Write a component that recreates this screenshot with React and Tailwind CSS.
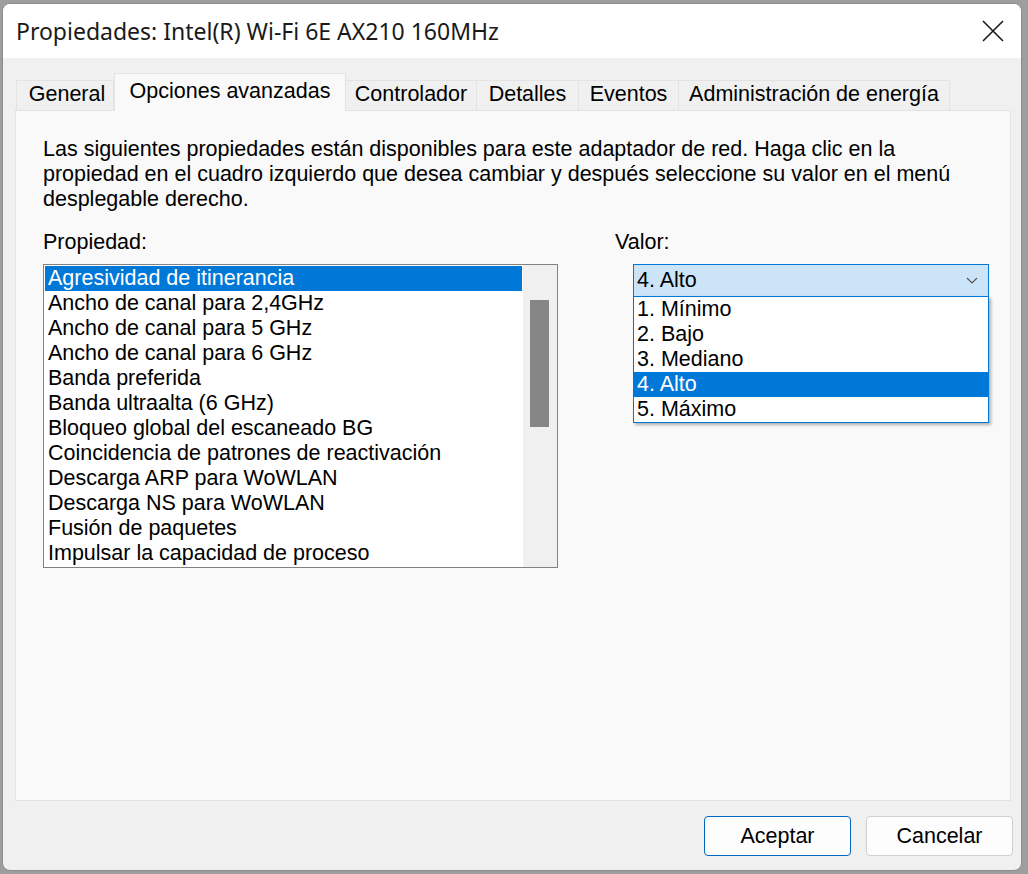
import React, { useState } from 'react';

const tabs = [
  { label: 'General', w: 'w-[98px]' },
  { label: 'Opciones avanzadas', w: 'w-[232px]' },
  { label: 'Controlador', w: 'w-[132px]' },
  { label: 'Detalles', w: 'w-[103px]' },
  { label: 'Eventos', w: 'w-[101px]' },
  { label: 'Administración de energía', w: 'w-[272px]' },
];

const properties = [
  'Agresividad de itinerancia',
  'Ancho de canal para 2,4GHz',
  'Ancho de canal para 5 GHz',
  'Ancho de canal para 6 GHz',
  'Banda preferida',
  'Banda ultraalta (6 GHz)',
  'Bloqueo global del escaneado BG',
  'Coincidencia de patrones de reactivación',
  'Descarga ARP para WoWLAN',
  'Descarga NS para WoWLAN',
  'Fusión de paquetes',
  'Impulsar la capacidad de proceso',
];

const values = ['1. Mínimo', '2. Bajo', '3. Mediano', '4. Alto', '5. Máximo'];

export default function App() {
  const [activeTab] = useState(1);
  const [selectedProp, setSelectedProp] = useState(0);
  const [value, setValue] = useState(3);

  return (
    <div className="w-[1028px] h-[874px] bg-[#9e9e9e] pt-[3px] pl-[2px] pr-[6px] pb-[3px] overflow-hidden">
      <div className="h-full flex flex-col rounded-[8px] border border-[#8c8c8c] bg-[#f0f0f0] overflow-hidden [font-family:'Liberation_Sans',Arial,sans-serif] text-[21.5px] leading-[25px] text-black">
        {/* title bar */}
        <div className="h-[54px] shrink-0 bg-white flex items-center justify-between pl-[13px] pr-[17px]">
          <span className="[font-family:'Noto_Sans',sans-serif] text-[23px] leading-[30px] text-[#1a1a1a]">
            Propiedades: Intel(R) Wi-Fi 6E AX210 160MHz
          </span>
          <svg width="22" height="22" viewBox="0 0 22 22">
            <path d="M1 1 L21 21 M21 1 L1 21" stroke="#1a1a1a" strokeWidth="1.6" fill="none" />
          </svg>
        </div>

        {/* tab strip */}
        <div className="flex items-end h-[52px] pl-[14px] pt-[14px]">
          {tabs.map((t, i) =>
            i === activeTab ? (
              <div
                key={t.label}
                className={`${t.w} h-[38px] -mb-[1px] relative z-10 bg-[#f9f9f9] border border-b-0 border-[#e3e3e3] flex items-start justify-center pt-[5px]`}
              >
                {t.label}
              </div>
            ) : (
              <div
                key={t.label}
                className={`${t.w} h-[30px] bg-[#f0f0f0] border border-b-0 border-[#e3e3e3] -ml-[1px] flex items-center justify-center pb-[2px] ${
                  i === 0 ? 'pl-[4px]' : ''
                }`}
              >
                {t.label}
              </div>
            )
          )}
        </div>

        {/* tab page */}
        <div className="ml-[12px] mr-[10px] h-[691px] shrink-0 bg-[#f9f9f9] border border-[#e3e3e3] pl-[27px] pt-[26px]">
          <p className="w-[920px]">
            Las siguientes propiedades están disponibles para este adaptador de red. Haga clic en la
            propiedad en el cuadro izquierdo que desea cambiar y después seleccione su valor en el menú
            desplegable derecho.
          </p>

          <div className="flex mt-[18px]">
            <div className="w-[515px]">
              <div>Propiedad:</div>
              <div className="mt-[9px] h-[304px] border border-[#828282] bg-white flex">
                <ul className="flex-1 p-[1px]">
                  {properties.map((p, i) => (
                    <li
                      key={p}
                      onClick={() => setSelectedProp(i)}
                      className={`h-[25px] pl-[3px] whitespace-nowrap ${
                        i === selectedProp ? 'bg-[#0078d7] text-white' : ''
                      }`}
                    >
                      {p}
                    </li>
                  ))}
                </ul>
                <div className="w-[34px] bg-[#f0f0f0] pt-[35px] pl-[7px]">
                  <div className="w-[19px] h-[127px] bg-[#868686]" />
                </div>
              </div>
            </div>

            <div className="ml-[57px] w-[374px]">
              <div>Valor:</div>
              <div className="relative mt-[9px] ml-[18px] w-[356px]">
                <div className="h-[33px] border border-[#0078d7] bg-[#cce4f7] flex items-center justify-between pl-[3px] pr-[10px]">
                  <span>{values[value]}</span>
                  <svg width="12" height="8" viewBox="0 0 12 8">
                    <path d="M1 1 L6 6 L11 1" stroke="#555" strokeWidth="1.2" fill="none" />
                  </svg>
                </div>
                <ul className="absolute left-0 top-[32px] w-[356px] bg-white border border-[#0078d7] shadow-[2px_2px_3px_rgba(0,0,0,0.3)] z-20">
                  {values.map((v, i) => (
                    <li
                      key={v}
                      onClick={() => setValue(i)}
                      className={`h-[25px] pl-[3px] ${i === value ? 'bg-[#0078d7] text-white' : ''}`}
                    >
                      {v}
                    </li>
                  ))}
                </ul>
              </div>
            </div>
          </div>
        </div>

        {/* footer buttons */}
        <div className="flex justify-end gap-[15px] pt-[15px] pr-[8px]">
          <button className="w-[147px] h-[40px] rounded-[4px] border border-[#0067c0] bg-[#fdfdfd]">
            Aceptar
          </button>
          <button className="w-[147px] h-[40px] rounded-[4px] border border-[#d0d0d0] bg-[#fdfdfd]">
            Cancelar
          </button>
        </div>
      </div>
    </div>
  );
}
